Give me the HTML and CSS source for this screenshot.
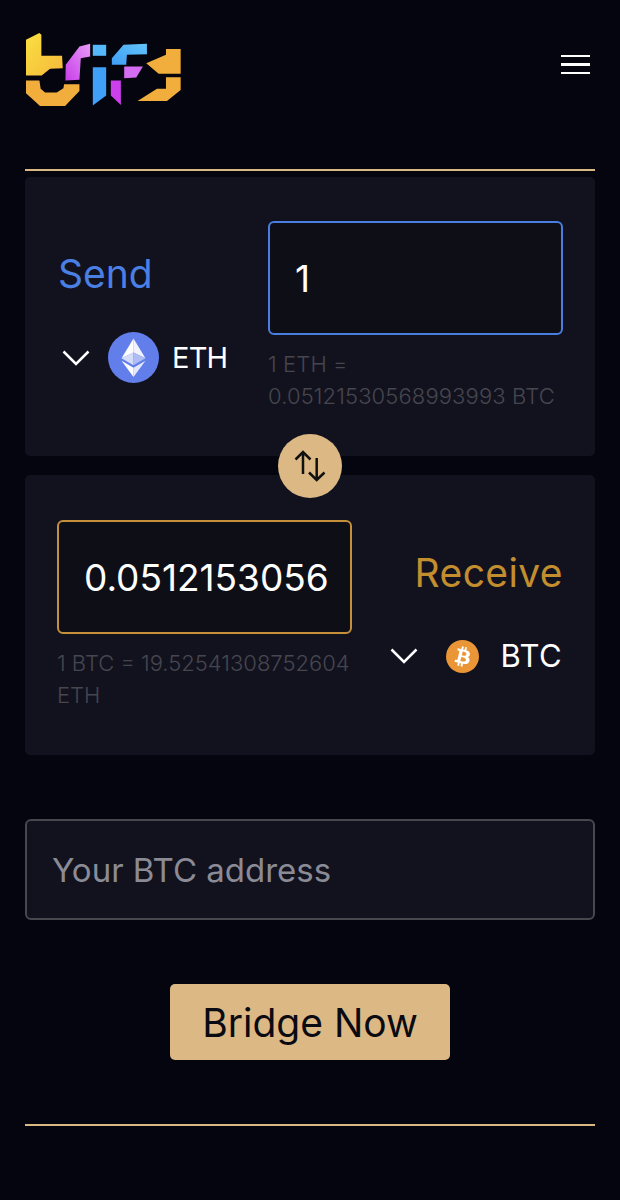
FILE: index.html
```html
<!DOCTYPE html>
<html lang="en">
<head>
<meta charset="utf-8">
<title>Brify Bridge</title>
<link rel="stylesheet" href="styles.css">
</head>
<body>
<div class="page">
  <header class="header">
    <svg class="logo" viewBox="75 62 470 224" aria-label="brify logo">
      <defs>
        <linearGradient id="yel" x1="0" y1="0" x2="1" y2="1"><stop offset="0" stop-color="#f9e040"/><stop offset="1" stop-color="#f6b93c"/></linearGradient>
        <linearGradient id="pur" x1="1" y1="0" x2="0" y2="1"><stop offset="0" stop-color="#e59bf7"/><stop offset="1" stop-color="#c93ee8"/></linearGradient>
        <linearGradient id="blu" x1="1" y1="0" x2="0" y2="1"><stop offset="0" stop-color="#62c4fb"/><stop offset="1" stop-color="#3f9df5"/></linearGradient>
      </defs>
      <polygon fill="url(#yel)" points="78,85 118,65 124,70 124,133 186,133 188,170 150,172 125,192 78,192"/>
      <polygon fill="#f2ae3c" points="78,207 118,207 122,232 135,243 170,243 190,230 192,218 238,218 238,238 195,283 120,283 78,245"/>
      <polygon fill="url(#pur)" points="197,160 238,105 270,97 270,135 242,140 238,205 196,207"/>
      <polygon fill="#55b8fa" points="278,100 318,100 318,133 278,133"/>
      <polygon fill="#409ff7" points="278,167 318,167 318,252 278,282"/>
      <polygon fill="url(#blu)" points="335,140 370,100 440,97 440,128 380,130 378,160 335,160"/>
      <polygon fill="#d46df2" points="372,165 428,165 408,198 372,200"/>
      <polygon fill="#cc40ec" points="332,207 362,207 362,280 332,252"/>
      <polygon fill="#f2ae3c" points="497,113 541,113 541,187 475,187 438,155 497,130"/>
      <polygon fill="#f2ae3c" points="497,197 541,197 541,235 500,268 412,268 470,232 497,232"/>
    </svg>
    <div class="menu"><span></span><span></span><span></span></div>
  </header>
  <hr class="rule">
  <section class="card card-send">
    <div class="side">
      <div class="label label-send">Send</div>
      <div class="coin">
        <svg class="chev" viewBox="0 0 28 16"><path d="M1.500 1.500 14 14 26.500 1.500"/></svg>
        <svg class="eth" viewBox="0 0 52 52">
          <circle cx="26" cy="26" r="26" fill="#627eea"/>
          <polygon points="26,6.500 26,21 38.200,26.800" fill="#f0f2fd"/>
          <polygon points="26,6.500 13.800,26.800 26,21" fill="#fff"/>
          <polygon points="26,21 13.800,26.800 26,34" fill="#d5dcf9"/>
          <polygon points="26,21 38.200,26.800 26,34" fill="#aebdf3"/>
          <polygon points="26,36.500 26,46 38.200,29.300" fill="#e3e8fb"/>
          <polygon points="26,36.500 13.800,29.300 26,46" fill="#fff"/>
        </svg>
        <span class="ticker ticker-eth">ETH</span>
      </div>
    </div>
    <div class="field">
      <input class="amount amount-blue" value="1" aria-label="Send amount">
      <p class="rate">1 ETH = 0.05121530568993993 BTC</p>
    </div>
  </section>
  <div class="swap-gap">
    <button class="swap" aria-label="Swap">
      <svg viewBox="0 0 32 32"><path d="M9 24V2M1.500 9.500 9 2 16.500 9.500M22.700 8V30M15 22.500 22.700 30 30.500 22.500"/></svg>
    </button>
  </div>
  <section class="card card-receive">
    <div class="field">
      <input class="amount amount-gold" value="0.0512153056" aria-label="Receive amount">
      <p class="rate rate-btc">1 BTC = 19.52541308752604 ETH</p>
    </div>
    <div class="side side-right">
      <div class="label label-receive">Receive</div>
      <div class="coin coin-btc">
        <svg class="chev" viewBox="0 0 28 16"><path d="M1.500 1.500 14 14 26.500 1.500"/></svg>
        <svg class="btc" viewBox="0 0 32 32">
          <circle cx="16" cy="16" r="16" fill="#ea9637"/>
          <path fill="#fff" d="M23.189 14.02c.314-2.096-1.283-3.223-3.465-3.975l.708-2.84-1.728-.43-.69 2.765c-.454-.114-.92-.22-1.385-.326l.695-2.783L15.596 6l-.708 2.839c-.376-.086-.746-.17-1.104-.26l.002-.009-2.384-.595-.46 1.846s1.283.294 1.256.312c.7.175.826.638.805 1.006l-.806 3.235c.048.012.11.03.18.057l-.183-.045-1.13 4.532c-.086.212-.303.531-.793.41.018.025-1.256-.313-1.256-.313l-.858 1.978 2.25.561c.418.105.828.215 1.231.318l-.715 2.872 1.727.43.708-2.84c.472.127.93.245 1.378.357l-.706 2.828 1.728.43.715-2.866c2.948.558 5.164.333 6.097-2.333.752-2.146-.037-3.385-1.588-4.192 1.13-.26 1.98-1.003 2.207-2.538zm-3.95 5.538c-.533 2.147-4.148.986-5.32.695l.95-3.805c1.172.293 4.929.872 4.37 3.11zm.535-5.569c-.487 1.953-3.495.96-4.47.717l.86-3.45c.975.243 4.118.696 3.61 2.733z"/>
        </svg>
        <span class="ticker ticker-btc">BTC</span>
      </div>
    </div>
  </section>
  <input class="address" placeholder="Your BTC address" aria-label="Your BTC address">
  <div class="action"><button class="bridge">Bridge Now</button></div>
  <hr class="rule">
</div>
</body>
</html>
```
FILE: styles.css
```css
* { box-sizing: border-box; }
html, body { margin: 0; padding: 0; background: #05050f; }
body { font-family: Inter, "Open Sans", sans-serif; color: #fff; overflow: hidden; }
.page { width: 620px; height: 1200px; padding: 0 25px; }
.header { height: 169px; padding-top: 32px; display: flex; justify-content: space-between; align-items: flex-start; }
.logo { width: 157px; height: 75px; display: block; }
.menu { display: flex; flex-direction: column; gap: 6px; margin: 22.500px 5px 0 0; width: 29px; }
.menu span { display: block; height: 2.500px; background: #fff; }
.rule { margin: 0; border: 0; height: 2px; background: #d9b883; }
.card { height: 280px; background: #12121f; border-radius: 5px; display: flex; justify-content: space-between; }
.card-send { margin-top: 6px; padding: 44px 32px 0 33px; height: 279px; }
.card-receive { padding: 45px 32px 0 32px; }
.side { display: flex; flex-direction: column; }
.side-right { align-items: flex-end; }
.label { font-size: 39px; line-height: 44px; margin-top: 31px; }
.label-send { color: #4a7fe3; }
.label-receive { color: #c38e2e; letter-spacing: 0.4px; }
.coin { display: flex; align-items: center; margin-top: 36px; }
.coin-btc { margin-top: 41px; }
.chev { width: 28px; height: 16px; margin: 0 18px 0 4px; fill: none; stroke: #fff; stroke-width: 2.500; }
.coin-btc .chev { margin: 0 28px 0 0; }
.eth { width: 51px; height: 51px; margin-right: 13px; }
.btc { width: 33px; height: 33px; margin-right: 22px; }
.ticker { font-size: 31px; line-height: 40px; font-weight: 400; }
.ticker-eth { font-size: 29px; letter-spacing: -0.8px; }
.ticker-btc { letter-spacing: 0.4px; margin-right: 1px; }
.field { width: 295px; }
.amount { display: block; width: 295px; height: 114px; padding: 0 0 0 25px; border-radius: 6px; background: #0e0e17; color: #fff; font: 400 37px Inter, sans-serif; outline: 0; }
.amount-blue { border: 2px solid #4a7de0; }
.amount-gold { border: 2px solid #c4913a; }
.rate { margin: 13px 0 0; font-size: 22px; line-height: 32px; font-weight: 300; letter-spacing: 0.12px; color: #46464e; overflow-wrap: anywhere; }
.rate-btc { letter-spacing: 0; }
.swap-gap { height: 19px; position: relative; }
.swap { position: absolute; left: 253px; top: -22px; width: 64px; height: 64px; border: 0; border-radius: 50%; background: #dbb884; padding: 0; display: flex; align-items: center; justify-content: center; }
.swap svg { width: 32px; height: 32px; fill: none; stroke: #111; stroke-width: 2.500; }
.address { display: block; width: 570px; height: 101px; margin-top: 64px; padding: 0 0 0 25px; background: #12121f; border: 2px solid #47474d; border-radius: 6px; color: #fff; font: 400 33px Inter, sans-serif; outline: 0; }
.address::placeholder { color: #8b8b96; opacity: 1; }
.action { display: flex; justify-content: center; margin: 64px 0 64px; }
.bridge { width: 280px; height: 76px; border: 0; border-radius: 5px; background: #dbb884; color: #0a0a12; font: 400 39px Inter, sans-serif; padding: 0; }
```
